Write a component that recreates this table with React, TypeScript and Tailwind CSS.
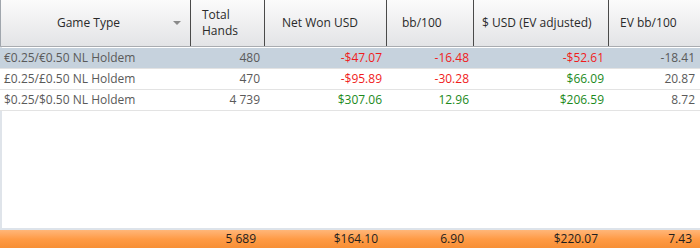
import React from "react";

const cols = "grid grid-cols-[191px_74px_122px_87px_135px_91px]";

type Cell = { t: string; c: "g" | "r" | "n" };
const rows: { sel: boolean; name: string; cells: Cell[] }[] = [
  {
    sel: true,
    name: "€0.25/€0.50 NL Holdem",
    cells: [
      { t: "480", c: "g" },
      { t: "-$47.07", c: "r" },
      { t: "-16.48", c: "r" },
      { t: "-$52.61", c: "r" },
      { t: "-18.41", c: "g" },
    ],
  },
  {
    sel: false,
    name: "£0.25/£0.50 NL Holdem",
    cells: [
      { t: "470", c: "g" },
      { t: "-$95.89", c: "r" },
      { t: "-30.28", c: "r" },
      { t: "$66.09", c: "n" },
      { t: "20.87", c: "g" },
    ],
  },
  {
    sel: false,
    name: "$0.25/$0.50 NL Holdem",
    cells: [
      { t: "4 739", c: "g" },
      { t: "$307.06", c: "n" },
      { t: "12.96", c: "n" },
      { t: "$206.59", c: "n" },
      { t: "8.72", c: "g" },
    ],
  },
];

const colorCls = (c: Cell["c"]) =>
  c === "r" ? "text-[#f01c1c]" : c === "n" ? "text-[#1c8a1c]" : "text-[#5a5a5a]";

export default function App() {
  return (
    <div
      className="w-[700px] h-[248px] flex flex-col bg-white overflow-hidden text-[12px]"
      style={{ fontFamily: '"Open Sans", "Noto Sans", sans-serif' }}
    >
      {/* header */}
      <div className={`${cols} h-[47px] bg-gradient-to-b from-[#fbfbfb] to-[#e3e4e6] text-[#2a2a2a] border-b border-[#a9acb0]`}>
        <div className="relative flex items-center justify-center border-r border-[#4a4a4a] border-l border-l-[#a0a6ad]">
          <span className="pr-[14px]">Game Type</span>
          <div className="absolute right-[9px] top-[21px] w-0 h-0 border-l-[4px] border-r-[4px] border-t-[4px] border-l-transparent border-r-transparent border-t-[#8a8a8a]" />
        </div>
        <div className="flex items-center pl-[11px] leading-[16px] border-r border-[#4a4a4a]">
          <span>
            Total
            <br />
            Hands
          </span>
        </div>
        <div className="flex items-center pl-[17px] border-r border-[#4a4a4a]">Net Won USD</div>
        <div className="flex items-center pl-[15px] border-r border-[#4a4a4a]">bb/100</div>
        <div className="flex items-center pl-[8px] border-r border-[#4a4a4a]">$ USD (EV adjusted)</div>
        <div className="flex items-center pl-[11px]">EV bb/100</div>
      </div>
      {/* body */}
      <div className="flex-1 border-l-2 border-[#dfe4ea] pt-[1px]">
        {rows.map((r, i) => (
          <div
            key={i}
            className={`${cols} h-[21px] items-center border-b border-[#e3e3e3] -ml-[2px] pl-[2px] ${r.sel ? "bg-[#c6d2dd]" : "bg-white"}`}
          >
            <div className="pl-[2px] text-[#5a5a5a] whitespace-nowrap">{r.name}</div>
            {r.cells.map((c, j) => (
              <div key={j} className={`text-right pr-[7px] whitespace-nowrap ${colorCls(c.c)}`}>
                {c.t}
              </div>
            ))}
          </div>
        ))}
      </div>
      {/* footer */}
      <div className="border-t-2 border-[#dde3ea]">
        <div className={`${cols} h-[18px] items-center bg-gradient-to-b from-[#ffb678] via-[#ff9b45] to-[#f78f35] text-[#1e1e1e]`}>
          <div />
          <div className="text-right pr-[9px]">5 689</div>
          <div className="text-right pr-[9px]">$164.10</div>
          <div className="text-right pr-[10px]">6.90</div>
          <div className="text-right pr-[11px]">$220.07</div>
          <div className="text-right pr-[8px]">7.43</div>
        </div>
      </div>
    </div>
  );
}
